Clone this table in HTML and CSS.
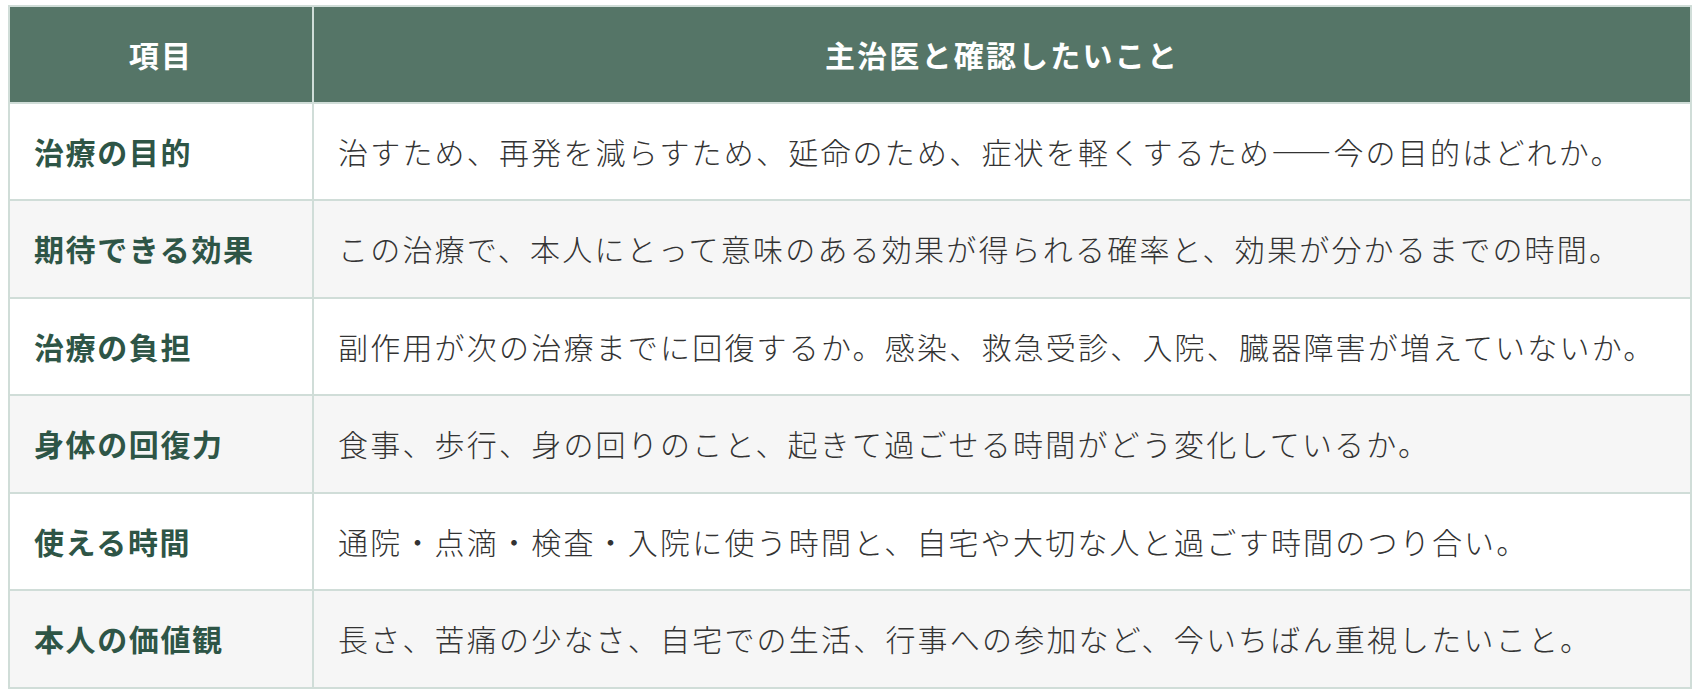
FILE: index.html
```html
<!DOCTYPE html>
<html lang="ja">
<head>
<meta charset="utf-8">
<link rel="stylesheet" href="styles.css">
</head>
<body>
<div class="wrap">
<table class="tbl">
<colgroup><col class="c1"><col class="c2"></colgroup>
<thead>
<tr><th>項目</th><th>主治医と確認したいこと</th></tr>
</thead>
<tbody>
<tr><td class="k">治療の目的</td><td>治すため、再発を減らすため、延命のため、症状を軽くするため——今の目的はどれか。</td></tr>
<tr><td class="k">期待できる効果</td><td>この治療で、本人にとって意味のある効果が得られる確率と、効果が分かるまでの時間。</td></tr>
<tr><td class="k">治療の負担</td><td>副作用が次の治療までに回復するか。感染、救急受診、入院、臓器障害が増えていないか。</td></tr>
<tr><td class="k">身体の回復力</td><td>食事、歩行、身の回りのこと、起きて過ごせる時間がどう変化しているか。</td></tr>
<tr><td class="k">使える時間</td><td>通院・点滴・検査・入院に使う時間と、自宅や大切な人と過ごす時間のつり合い。</td></tr>
<tr><td class="k">本人の価値観</td><td>長さ、苦痛の少なさ、自宅での生活、行事への参加など、今いちばん重視したいこと。</td></tr>
</tbody>
</table>
</div>
</body>
</html>
```
FILE: styles.css
```css
html, body {
  margin: 0;
  padding: 0;
  background: #ffffff;
}
.wrap {
  padding: 5px 8px;
}
.tbl {
  width: 1684px;
  border-collapse: collapse;
  border: 2px solid #d0ddd8;
  font-family: "Noto Sans CJK JP", "Noto Sans", sans-serif;
  font-size: 30px;
  font-weight: 300;
  letter-spacing: 2.2px;
  color: #333333;
}
.c1 { width: 304px; }
.tbl th, .tbl td {
  border: 2px solid #d0ddd8;
  padding: 24px 24px;
  line-height: 47.5px;
  text-align: left;
  vertical-align: middle;
}
.tbl th {
  background: #557567;
  color: #ffffff;
  font-weight: 700;
  text-align: center;
  padding: 24px 24px;
  line-height: 46.5px;
}
.tbl tbody tr:nth-child(even) td {
  background: #f6f6f6;
}
.tbl td.k {
  font-weight: 700;
  color: #2e5546;
  letter-spacing: 1.6px;
}
```
